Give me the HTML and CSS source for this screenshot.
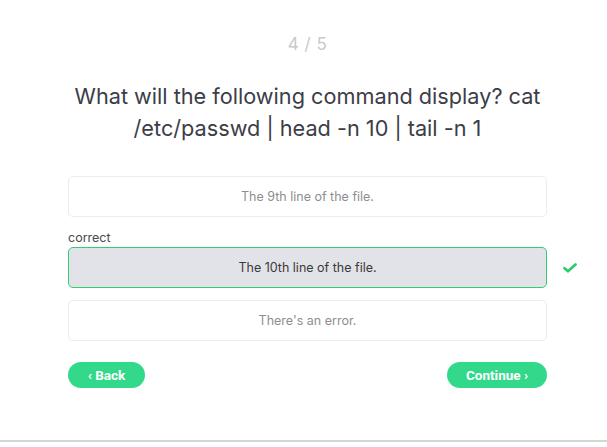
FILE: index.html
```html
<!DOCTYPE html>
<html>
<head>
<meta charset="utf-8">
<link rel="stylesheet" href="styles.css">
</head>
<body>
<div class="page">
  <div class="quiz">
    <div class="progress">4 / 5</div>
    <h1 class="question">What will the following command display? cat /etc/passwd | head -n 10 | tail -n 1</h1>
    <div class="options">
      <div class="group">
        <div class="option">The 9th line of the file.</div>
      </div>
      <div class="group">
        <div class="label">correct</div>
        <div class="row">
          <div class="option selected">The 10th line of the file.</div>
          <svg class="check" width="14" height="10" viewBox="0 0 14 10"><path d="M1.5 5.2 L5 8.3 L12.5 1.5" fill="none" stroke="#2ecc71" stroke-width="2.8" stroke-linecap="round" stroke-linejoin="round"/></svg>
        </div>
      </div>
      <div class="group">
        <div class="option">There's an error.</div>
      </div>
    </div>
    <div class="nav">
      <button class="btn">‹ Back</button>
      <button class="btn">Continue ›</button>
    </div>
  </div>
  <div class="footer-line"></div>
</div>
</body>
</html>
```
FILE: styles.css
```css
html, body {
  margin: 0;
  padding: 0;
  background: #fff;
}
body {
  font-family: "Inter", "Roboto", sans-serif;
}
.page {
  height: 447px;
  display: flex;
  flex-direction: column;
}
.quiz {
  width: 479px;
  margin-left: 68px;
  padding-top: 32px;
  display: flex;
  flex-direction: column;
  flex: 1;
}
.progress {
  text-align: center;
  color: #c9c9c9;
  font-size: 17px;
  line-height: 24px;
  height: 24px;
  letter-spacing: 0.5px;
}
.question {
  margin: 24px -10px 0 -10px;
  text-align: center;
  font-weight: 400;
  font-size: 21.7px;
  line-height: 32px;
  color: #3c3d47;
  letter-spacing: 0;
}
.options {
  margin-top: 32px;
  display: flex;
  flex-direction: column;
  gap: 12px;
}
.label {
  font-size: 12.5px;
  line-height: 18px;
  color: #4a4a4a;
  margin-bottom: 0;
}
.row {
  position: relative;
}
.option {
  box-sizing: border-box;
  height: 41px;
  border: 1px solid #ececec;
  border-radius: 5px;
  display: flex;
  align-items: center;
  justify-content: center;
  font-size: 12.5px;
  color: #8e8e8e;
}
.option.selected {
  background: #e2e3e8;
  border-color: #35cc72;
  color: #3a3a3a;
}
.check {
  position: absolute;
  left: 495px;
  top: 16px;
}
.nav {
  margin-top: 21px;
  display: flex;
  justify-content: space-between;
}
.btn {
  height: 26px;
  border: none;
  border-radius: 13px;
  background: #33d98a;
  color: #fff;
  font-family: "Roboto", sans-serif;
  font-weight: 700;
  font-size: 13.5px;
  padding: 0 16px;
  min-width: 77px;
}
.btn:last-child {
  width: 100px;
}
.footer-line {
  height: 2px;
  background: #d6d6d6;
  margin-bottom: 5px;
}
```
